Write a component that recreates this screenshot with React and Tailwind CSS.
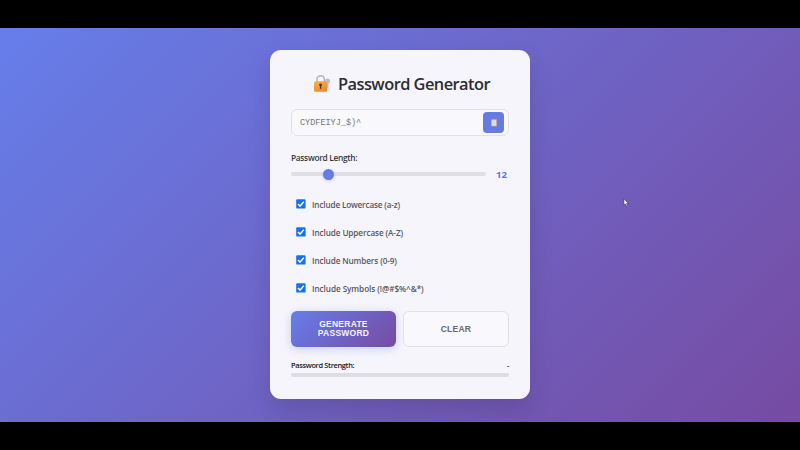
const options = [
  { label: 'Include Lowercase (a-z)', tracking: 'tracking-[-0.16px]' },
  { label: 'Include Uppercase (A-Z)', tracking: 'tracking-[-0.1px]' },
  { label: 'Include Numbers (0-9)', tracking: 'tracking-[-0.12px]' },
  { label: 'Include Symbols (!@#$%^&*)', tracking: 'tracking-[-0.07px]' },
];

function LockIcon() {
  return (
    <svg width="18" height="18" viewBox="0 0 18 18" className="shrink-0">
      <defs>
        <linearGradient id="lock" x1="0" y1="0" x2="0.6" y2="1">
          <stop offset="0" stopColor="#fbb545" />
          <stop offset="1" stopColor="#ed8733" />
        </linearGradient>
      </defs>
      <circle cx="14.6" cy="6" r="2.5" fill="#bdbad6" />
      <path d="M14.8 8 L14.6 13" stroke="#bdbad6" strokeWidth="1.4" />
      <path d="M4 8 V4.2 a3.7 3.4 0 0 1 7.4 0 V8" fill="none" stroke="#b8b0ae" strokeWidth="1.5" />
      <rect x="1" y="6.2" width="13.2" height="10.6" rx="1.6" fill="url(#lock)" />
      <circle cx="7.6" cy="10" r="1.4" fill="#49342f" />
      <path d="M7.6 10 V13.8" stroke="#49342f" strokeWidth="1.3" />
    </svg>
  );
}

function ClipboardIcon() {
  return (
    <svg width="8" height="9" viewBox="0 0 8 9">
      <rect x="1" y="1" width="6" height="7.5" rx="0.7" fill="#c39a94" />
      <rect x="1.8" y="2" width="4.4" height="5.7" fill="#e9e2ec" />
      <rect x="2.5" y="0.7" width="3" height="1.6" rx="0.4" fill="#a9a5b8" />
      <path d="M2.5 4 H5.5 M2.5 5.5 H5.5" stroke="#c5bfd0" strokeWidth="0.5" />
    </svg>
  );
}

function Checkbox() {
  return (
    <svg width="10" height="10" viewBox="0 0 10 10" className="shrink-0">
      <rect x="0.2" y="0.2" width="9.4" height="9.4" rx="1.2" fill="#1672e8" />
      <path d="M2 5.1 L4 7.1 L7.8 2.7" fill="none" stroke="#fff" strokeWidth="1.4" />
    </svg>
  );
}

export default function App() {
  return (
    <div className="relative h-[450px] w-[800px] overflow-hidden bg-black py-7 font-['Open_Sans','Noto_Sans',sans-serif]">
      <main className="flex h-[394px] justify-center overflow-hidden bg-[linear-gradient(135deg,#667eea_0%,#764ba2_100%)] pt-[22px]">
        <section className="flex h-[349px] w-[260px] flex-col rounded-[11px] bg-[#f6f5fb] px-[21px] shadow-[0_11px_24px_rgba(0,0,0,0.13)]">
          <h1 className="mt-[22px] flex h-6 items-center justify-center gap-[7px] whitespace-nowrap pl-[3px] text-[16.4px] font-semibold leading-6 tracking-[-0.54px] text-[#2d2d33]">
            <LockIcon />
            <span>Password Generator</span>
          </h1>

          <div className="mt-[13px] flex h-[27px] shrink-0 items-center justify-between rounded-[6px] border border-[#e2e2e6] bg-[#f9f8fc] pl-2 pr-1">
            <span className="pt-[2px] font-['Liberation_Mono',monospace] text-[8.5px] leading-none text-[#78787c]">CYDFEIYJ_$)^</span>
            <button className="flex h-[21px] w-[21px] items-center justify-center rounded-[4px] bg-[#667be2]">
              <ClipboardIcon />
            </button>
          </div>

          <label className="mt-4 h-3 whitespace-nowrap text-[8.4px] font-semibold leading-3 tracking-[-0.32px] text-[#3a3a40]">Password Length:</label>
          <div className="mt-1 flex h-3 shrink-0 items-center">
            <div className="flex h-1 w-[195px] items-center rounded-full bg-[#e0dfe4] pl-[31.5px]">
              <div className="h-[11px] w-[11px] rounded-full bg-[#667be5] shadow-[0_1px_3px_rgba(102,126,234,0.3)]" />
            </div>
            <span className="ml-[10px] pt-px text-[9.6px] font-bold leading-3 text-[#6579d4]">12</span>
          </div>

          <div className="mt-[10px] flex flex-col pl-[5px]">
            {options.map((option) => (
              <div key={option.label} className="flex h-7 items-center gap-[6px]">
                <Checkbox />
                <span className={`whitespace-nowrap pt-[2px] text-[8.2px] font-semibold leading-3 text-[#58585e] ${option.tracking}`}>
                  {option.label}
                </span>
              </div>
            ))}
          </div>

          <div className="mt-[9px] flex h-9 shrink-0 gap-[7px] font-['Liberation_Sans',sans-serif] text-[8.5px] font-bold tracking-[0.25px]">
            <button className="w-[105px] rounded-[6px] bg-[linear-gradient(135deg,#667eea_0%,#764ba2_100%)] leading-[9.5px] text-[#f5f3ff] shadow-[0_2px_8px_rgba(102,126,234,0.35)]">
              GENERATE
              <br />
              PASSWORD
            </button>
            <button className="w-[106px] rounded-[6px] border border-[#e2e2e6] bg-[#f9f8fc] text-[#68686c]">CLEAR</button>
          </div>

          <div className="mt-3 flex h-3 justify-between whitespace-nowrap text-[7.4px] font-semibold leading-3 tracking-[-0.33px] text-[#17171b]">
            <span>Password Strength:</span>
            <span>-</span>
          </div>
          <div className="mt-[2px] h-1 shrink-0 rounded-full bg-[#dedde2]" />
        </section>
      </main>

      <svg width="6" height="9" viewBox="0 0 6 9" className="absolute left-[623px] top-[198px]">
        <path d="M1 0.7 V7 L2.4 5.8 L3.4 8 L4.4 7.5 L3.5 5.4 H5.2 Z" fill="#fff" stroke="#33304b" strokeWidth="0.5" />
      </svg>
    </div>
  );
}
